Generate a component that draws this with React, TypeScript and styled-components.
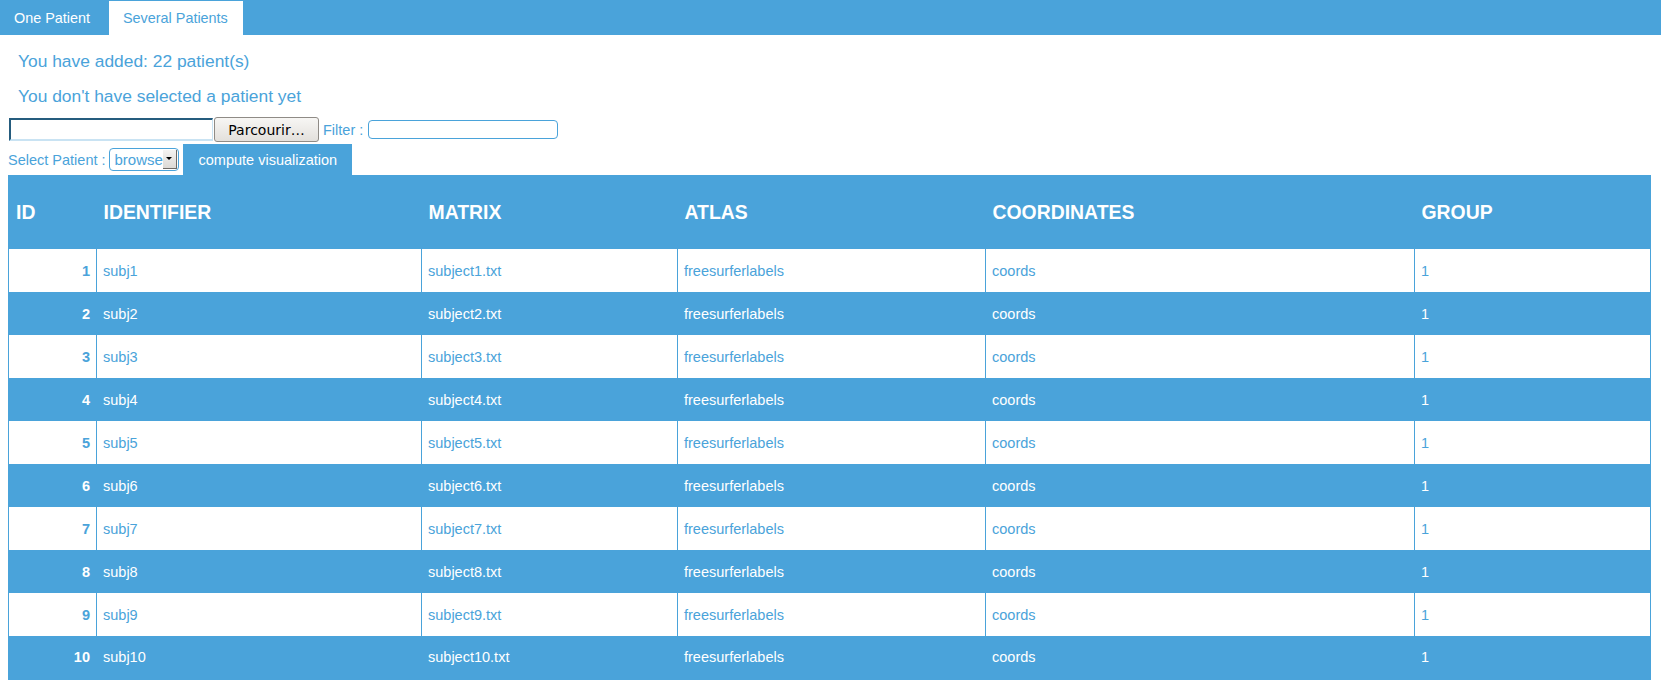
import React from "react";
import styled, { createGlobalStyle } from "styled-components";

const BLUE = "#4aa3da";

const GlobalStyle = createGlobalStyle`
  html, body { margin: 0; padding: 0; background: #fff; }
  body { font-family: "Liberation Sans", Arial, sans-serif; }
`;

const TabBar = styled.div`
  display: flex;
  align-items: flex-end;
  height: 35px;
  background: ${BLUE};
  gap: 4px;
`;

const Tab = styled.div<{ $active?: boolean }>`
  height: 34px;
  line-height: 34px;
  padding: 0 15px 0 14px;
  font-size: 14.4px;
  color: ${(p) => (p.$active ? BLUE : "#fff")};
  background: ${(p) => (p.$active ? "#fff" : "transparent")};
`;

const Content = styled.div`
  padding: 9px 11px 0 8px;
`;

const Info = styled.p`
  margin: 0;
  padding-left: 10px;
  font-size: 17.4px;
  line-height: 35px;
  color: ${BLUE};
`;

const FileRow = styled.div`
  display: flex;
  align-items: center;
  height: 25px;
  margin-top: 3px;
  padding-left: 1px;
`;

const FileField = styled.div`
  box-sizing: border-box;
  width: 204px;
  height: 23px;
  border-top: 2px solid #255c7e;
  border-left: 2px solid #255c7e;
  border-bottom: 2px solid #c9e3f3;
  border-right: 1px solid #c9e3f3;
  background: #fff;
`;

const BrowseButton = styled.button`
  box-sizing: border-box;
  width: 105px;
  height: 25px;
  margin-left: 1px;
  padding: 0;
  border: 1px solid #8f8b86;
  border-radius: 3px;
  background: linear-gradient(#f7f6f4, #e3e0dc);
  font-family: "DejaVu Sans", sans-serif;
  font-size: 14px;
  color: #000;
`;

const Label = styled.span`
  font-size: 14.5px;
  color: ${BLUE};
  white-space: pre;
`;

const FilterLabel = styled(Label)`
  margin-left: 4px;
`;

const FilterInput = styled.input`
  box-sizing: border-box;
  width: 190px;
  height: 19px;
  margin-left: 5px;
  border: 1px solid ${BLUE};
  border-radius: 4px;
  outline: none;
  padding: 0 4px;
`;

const SelectRow = styled.div`
  display: flex;
  align-items: center;
  height: 31px;
  margin-top: 2px;
`;

const SelectBox = styled.div`
  box-sizing: border-box;
  display: flex;
  align-items: center;
  width: 70px;
  height: 23px;
  margin: 0 0 1px 3px;
  padding: 0 1px 0 5px;
  border: 1px solid ${BLUE};
  border-radius: 4px;
  font-size: 15px;
  color: ${BLUE};
`;

const SelectText = styled.span`
  flex: 1;
`;

const ArrowBox = styled.span`
  box-sizing: border-box;
  display: flex;
  align-items: center;
  justify-content: center;
  width: 14px;
  height: 19px;
  background: linear-gradient(#f4f3f1, #dcd9d5);
  border-right: 1px solid #6d6a66;
  border-bottom: 1px solid #6d6a66;
  &::after {
    content: "";
    border-left: 3px solid transparent;
    border-right: 3px solid transparent;
    border-top: 3px solid #000;
  }
`;

const ComputeButton = styled.button`
  height: 31px;
  margin-left: 4px;
  padding: 0 15px 0 16px;
  border: none;
  background: ${BLUE};
  color: #fff;
  font-family: "Liberation Sans", Arial, sans-serif;
  font-size: 14.5px;
  align-self: flex-end;
`;

const Table = styled.table`
  width: 100%;
  border-collapse: collapse;
  table-layout: fixed;
  border: 1px solid ${BLUE};
`;

const HeadCell = styled.th`
  height: 72px;
  padding: 0 0 1px 7px;
  background: ${BLUE};
  color: #fff;
  font-size: 19.4px;
  font-weight: bold;
  text-align: left;
  vertical-align: middle;
`;

const Row = styled.tr<{ $alt: boolean }>`
  height: 43px;
  background: ${(p) => (p.$alt ? BLUE : "#fff")};
  color: ${(p) => (p.$alt ? "#fff" : BLUE)};
`;

const Cell = styled.td`
  padding: 0 0 0 6px;
  border-left: 1px solid ${BLUE};
  font-size: 14.5px;
  vertical-align: middle;
`;

const IdCell = styled(Cell)`
  padding: 0 6px 0 0;
  text-align: right;
  font-weight: bold;
`;

const columns = [
  { name: "ID", width: 88 },
  { name: "IDENTIFIER", width: 325 },
  { name: "MATRIX", width: 256 },
  { name: "ATLAS", width: 308 },
  { name: "COORDINATES", width: 429 },
  { name: "GROUP", width: 236 },
];

const rows = Array.from({ length: 10 }, (_, i) => ({
  id: i + 1,
  identifier: `subj${i + 1}`,
  matrix: `subject${i + 1}.txt`,
  atlas: "freesurferlabels",
  coords: "coords",
  group: "1",
}));

export default function App() {
  return (
    <>
      <GlobalStyle />
      <TabBar>
        <Tab>One Patient</Tab>
        <Tab $active>Several Patients</Tab>
      </TabBar>
      <Content>
        <Info>You have added: 22 patient(s)</Info>
        <Info>You don't have selected a patient yet</Info>
        <FileRow>
          <FileField />
          <BrowseButton>Parcourir…</BrowseButton>
          <FilterLabel>Filter :</FilterLabel>
          <FilterInput />
        </FileRow>
        <SelectRow>
          <Label>Select Patient :</Label>
          <SelectBox>
            <SelectText>browse</SelectText>
            <ArrowBox />
          </SelectBox>
          <ComputeButton>compute visualization</ComputeButton>
        </SelectRow>
        <Table>
          <colgroup>
            {columns.map((c) => (
              <col key={c.name} style={{ width: c.width }} />
            ))}
          </colgroup>
          <thead>
            <tr>
              {columns.map((c) => (
                <HeadCell key={c.name}>{c.name}</HeadCell>
              ))}
            </tr>
          </thead>
          <tbody>
            {rows.map((r, i) => (
              <Row key={r.id} $alt={i % 2 === 1}>
                <IdCell>{r.id}</IdCell>
                <Cell>{r.identifier}</Cell>
                <Cell>{r.matrix}</Cell>
                <Cell>{r.atlas}</Cell>
                <Cell>{r.coords}</Cell>
                <Cell>{r.group}</Cell>
              </Row>
            ))}
          </tbody>
        </Table>
      </Content>
    </>
  );
}
